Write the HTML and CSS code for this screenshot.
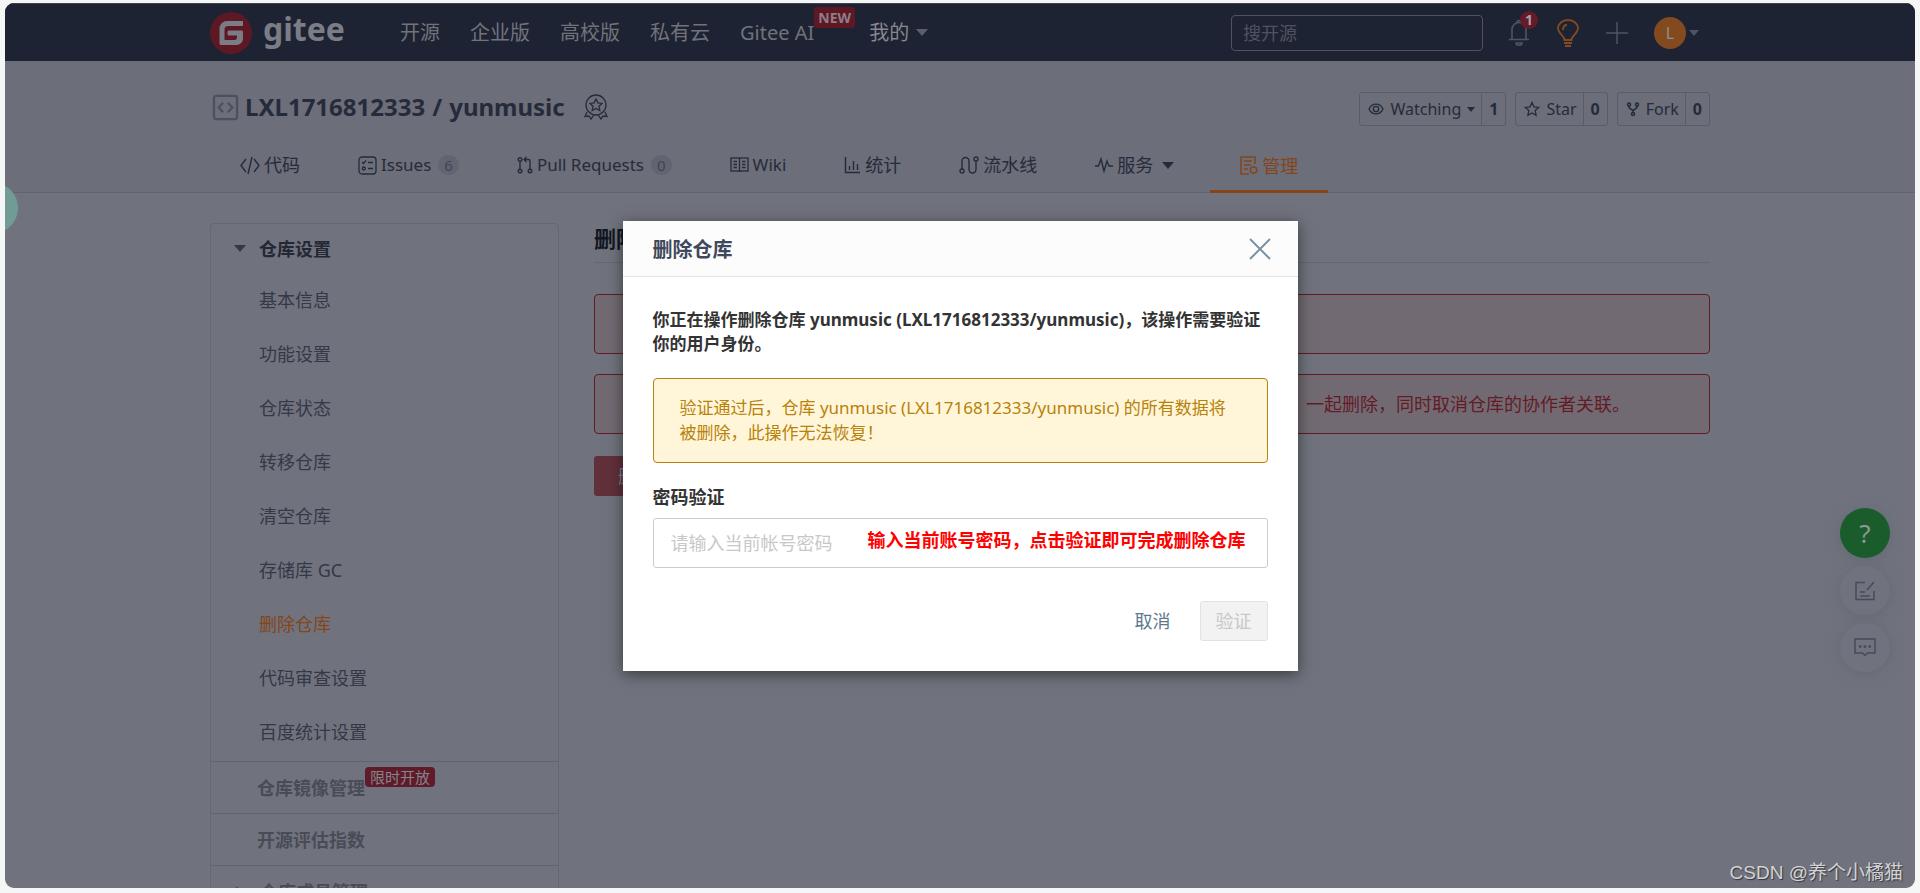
FILE: index.html
```html
<!DOCTYPE html>
<html lang="zh-CN">
<head>
<meta charset="utf-8">
<title>删除仓库 - yunmusic - Gitee</title>
<meta name="viewport" content="width=device-width, initial-scale=1">
<link rel="stylesheet" href="styles.css">
</head>
<body>
<div class="window">
  <header class="topbar">
    <div class="container topbar-inner">
      <a class="logo" href="#" aria-label="gitee">
        <svg class="logo-mark" viewBox="0 0 42 42"><circle cx="21" cy="21" r="21" fill="#5e1824"/><path d="M33 9H17a7.500 7.500 0 0 0-7.500 7.500V31.500c0 .8.700 1.500 1.500 1.500h15.500a6.500 6.500 0 0 0 6.500-6.500V20c0-.8-.7-1.500-1.500-1.500H19c-.8 0-1.500.7-1.500 1.500v2c0 .8.700 1.500 1.500 1.500h8v2c0 1.300-.9 2.500-2.300 2.500H14.500V17.500A3.500 3.500 0 0 1 18 14h15z" fill="#7b7d86"/></svg>
        <span class="logo-text">gitee</span>
      </a>
      <nav class="mainnav">
        <a href="#">开源</a>
        <a href="#">企业版</a>
        <a href="#">高校版</a>
        <a href="#">私有云</a>
        <a href="#" class="nav-ai">Gitee AI<span class="new-tag">NEW</span></a>
        <a href="#" class="nav-mine">我的<i class="caret"></i></a>
      </nav>
      <input class="search" type="text" placeholder="搜开源" aria-label="搜开源">
      <div class="tools">
        <button class="tool" aria-label="通知"><svg width="22" height="26" viewBox="0 0 22 26" fill="none" stroke="#4e5464" stroke-width="1.600"><path d="M4 19V9.500a7 7 0 0 1 14 0V19M1 19.500h20M9 2.500a2 2 0 0 1 4 0M8 23h6c0 3-6 3-6 0z"/></svg><span class="count">1</span></button>
        <button class="tool" aria-label="建议"><svg width="24" height="28" viewBox="0 0 24 28" fill="none" stroke="#824a1e" stroke-width="1.800"><path d="M8.500 21c0-4-6.500-7-6.500-11.500a10 8.500 0 0 1 20 0C22 14 15.500 17 15.500 21zM7 11c0-3 1.500-5 4-5M8 24h8M9 27h6"/></svg></button>
        <button class="tool" aria-label="新建"><svg width="22" height="22" viewBox="0 0 22 22" stroke="#4e5464" stroke-width="1.500"><path d="M11 0v22M0 11h22"/></svg></button>
        <button class="tool user" aria-label="用户"><span class="avatar">L</span><i class="caret dim"></i></button>
      </div>
    </div>
  </header>

  <section class="repo">
    <div class="container">
      <div class="repo-head">
        <h1 class="repo-title">
          <svg width="25" height="25" viewBox="0 0 26 26" fill="none" stroke="#4d515f" stroke-width="2.400"><rect x="1" y="1" width="24" height="24" rx="2"/><path d="M10.500 8L6 13l4.500 5M15.500 8L20 13l-4.500 5"/></svg>
          <a href="#">LXL1716812333</a><span>/</span><a href="#">yunmusic</a>
          <svg class="medal" width="24" height="26" viewBox="0 0 24 26" fill="none" stroke="#272c3c" stroke-width="1.300"><circle cx="12" cy="11" r="10"/><path d="M12 5l1.900 3.800 4.100.6-3 2.900.8 4.200-3.800-2-3.800 2 .8-4.200-3-2.900 4.100-.6zM3 18l-2 4.500 4-.5 2 3 3-4.500M21 18l2 4.500-4-.5-2 3-3-4.500"/></svg>
        </h1>
        <div class="repo-actions">
          <div class="action"><button><svg width="16" height="12" viewBox="0 0 16 12" fill="none" stroke="#262b3b" stroke-width="1.300"><path d="M1 6c3-6.500 11-6.500 14 0-3 6.500-11 6.500-14 0z"/><circle cx="8" cy="6" r="2.700"/></svg><span>Watching</span><i class="caret small"></i></button><a href="#">1</a></div>
          <div class="action"><button><svg width="16" height="16" viewBox="0 0 16 16" fill="none" stroke="#262b3b" stroke-width="1.300"><path d="M8 1.500l2 4.300 4.700.6-3.500 3.200.9 4.700L8 12l-4.100 2.300.9-4.700L1.300 6.400 6 5.800z"/></svg>Star</button><a href="#">0</a></div>
          <div class="action"><button><svg width="14" height="16" viewBox="0 0 14 16" fill="none" stroke="#262b3b" stroke-width="1.500"><circle cx="3" cy="3.500" r="1.500"/><circle cx="11" cy="3.500" r="1.500"/><circle cx="7" cy="13" r="1.500"/><path d="M3 5v1.500l4 3 4-3V5M7 9.500v2"/></svg>Fork</button><a href="#">0</a></div>
        </div>
      </div>
      <nav class="tabs">
        <a href="#"><svg width="20" height="18" viewBox="0 0 20 18" fill="none" stroke="#262b3b" stroke-width="1.400"><path d="M6 3L1 9.500 6 16M14 3l5 6.500L14 16M12 1L8 18"/></svg>代码</a>
        <a href="#" class="latin"><svg width="19" height="19" viewBox="0 0 19 19" fill="none" stroke="#262b3b" stroke-width="1.300"><rect x="1" y="1" width="17" height="17" rx="3"/><path d="M4 6l1.500 1.500L8 4.500M10 6.500h5M10 12.500h5"/><circle cx="5.800" cy="12.500" r="1.500"/></svg>Issues<span class="pill">6</span></a>
        <a href="#" class="latin"><svg width="16" height="18" viewBox="0 0 16 18" fill="none" stroke="#262b3b" stroke-width="1.400"><circle cx="3" cy="3.500" r="1.800"/><circle cx="3" cy="15" r="1.800"/><circle cx="13" cy="15" r="1.800"/><path d="M3 5.500V13M13 13V5c0-1-.5-1.500-1.500-1.500H7M9.500 1L7 3.500 9.500 6"/></svg>Pull Requests<span class="pill">0</span></a>
        <a href="#" class="latin"><svg width="19" height="16" viewBox="0 0 19 16" fill="none" stroke="#262b3b" stroke-width="1.300"><rect x="1" y="1" width="17" height="13"/><path d="M9.500 1v14M3.500 4.500H7M3.500 7.500H7M3.500 10.500H7M12 4.500h3.500M12 7.500h3.500M12 10.500h3.500"/></svg>Wiki</a>
        <a href="#"><svg width="17" height="18" viewBox="0 0 17 18" fill="none" stroke="#262b3b" stroke-width="1.400"><path d="M1.500 1v15.500H16M5.500 14v-4M9.500 14V5M13.500 14V8"/></svg>统计</a>
        <a href="#"><svg width="20" height="18" viewBox="0 0 20 18" fill="none" stroke="#262b3b" stroke-width="1.400"><circle cx="3" cy="15" r="2"/><circle cx="17" cy="3" r="2"/><path d="M3 13V5a3.500 3.500 0 0 1 7 0v8.500a3.500 3.500 0 0 0 7 0V5"/></svg>流水线</a>
        <a href="#"><svg width="18" height="16" viewBox="0 0 18 16" fill="none" stroke="#262b3b" stroke-width="1.400"><path d="M0 9h3.500L6 2l3 12 3-10 2 5h4"/></svg>服务<i class="caret big"></i></a>
        <a href="#" class="active"><svg width="18" height="19" viewBox="0 0 18 19" fill="none" stroke="#84451a" stroke-width="1.500"><path d="M15 8V1H1v17h8M4 5h8M4 9h7M4 13h4"/><path d="M13.500 10.500l3 1.700v3.600l-3 1.700-3-1.700v-3.600z"/></svg>管理</a>
      </nav>
    </div>
  </section>

  <div class="container content">
    <aside class="sidebar">
      <a href="#" class="side-title"><i class="caret"></i>仓库设置</a>
      <a href="#">基本信息</a>
      <a href="#">功能设置</a>
      <a href="#">仓库状态</a>
      <a href="#">转移仓库</a>
      <a href="#">清空仓库</a>
      <a href="#">存储库 GC</a>
      <a href="#" class="current">删除仓库</a>
      <a href="#">代码审查设置</a>
      <a href="#">百度统计设置</a>
      <a href="#" class="side-group">仓库镜像管理<span class="limited">限时开放</span></a>
      <a href="#" class="side-group">开源评估指数</a>
      <a href="#" class="side-group"><i class="caret right"></i>仓库成员管理</a>
    </aside>
    <main class="main">
      <h2>删除仓库</h2>
      <p class="danger">是否确认删除该仓库？此操作无法恢复！</p>
      <p class="danger">删除仓库将会连同其相关的所有数据（包括问题、合并请求、里程碑、附件、提醒等）一起删除，同时取消仓库的协作者关联。</p>
      <button class="delete">删除仓库</button>
    </main>
  </div>

  <div class="side-handle"></div>
  <div class="floaters">
    <button class="help" aria-label="帮助">?</button>
    <button aria-label="反馈"><svg width="20" height="20" viewBox="0 0 20 20" fill="none" stroke="#464b5b" stroke-width="1.500"><path d="M10 1.500H1v17h18V10M12 9l7-8M5 11h5M5 15h10"/></svg></button>
    <button aria-label="评论"><svg width="22" height="19" viewBox="0 0 22 19" fill="none" stroke="#464b5b" stroke-width="1.500"><path d="M1 1h20v14h-7.500L11 17.500 8.500 15H1z"/><path d="M5 8.500h2.500M9.700 8.500h2.500M14.500 8.500H17" stroke-width="2.500"/></svg></button>
  </div>

  <div class="overlay">
    <div class="modal" role="dialog" aria-labelledby="dlg-title">
      <div class="modal-head">
        <h3 id="dlg-title">删除仓库</h3>
        <button class="close" aria-label="关闭"><svg width="20" height="20" viewBox="0 0 20 20" stroke="#7892a3" stroke-width="2"><path d="M0 0l20 20M20 0L0 20"/></svg></button>
      </div>
      <form class="modal-body">
        <p class="lead">你正在操作删除仓库 yunmusic (LXL1716812333/yunmusic)，该操作需要验证你的用户身份。</p>
        <p class="warn">验证通过后，仓库 yunmusic (LXL1716812333/yunmusic) 的所有数据将被删除，此操作无法恢复！</p>
        <label for="pwd">密码验证</label>
        <div class="field">
          <input id="pwd" type="password" placeholder="请输入当前帐号密码">
          <span class="note">输入当前账号密码，点击验证即可完成删除仓库</span>
        </div>
        <div class="buttons">
          <button type="button" class="cancel">取消</button>
          <button type="submit" class="verify" disabled>验证</button>
        </div>
      </form>
    </div>
  </div>
  <div class="watermark">CSDN @养个小橘猫</div>
</div>
</body>
</html>
```
FILE: styles.css
```css
* { box-sizing: border-box; }
body {
  margin: 0;
  padding: 3px 5px 5px;
  background: #f5f6f6;
  font: 18px/24px "Noto Sans", "Noto Sans CJK SC", sans-serif;
  color: #262b3b;
}
a { color: inherit; text-decoration: none; }
button, input { font: inherit; color: inherit; }
button { padding: 0; border: 0; background: none; }
svg { display: block; flex: none; overflow: visible; }
h1, h2, h3, p { margin: 0; }

.window {
  position: relative;
  height: calc(100vh - 8px);
  overflow: hidden;
  border-radius: 9px;
  background: #70737d;
}
.container { width: 100%; max-width: 1500px; margin: 0 auto; }

.caret {
  flex: none;
  border: 6px solid transparent;
  border-top: 7px solid #5b5f6b;
  border-bottom: 0;
}
.caret.dim { border-width: 6px 5px 0; border-top-color: #4e5464; }
.caret.small { border-width: 5px 4px 0; border-top-color: #262b3b; }
.caret.big { border-top-color: #262b3b; }
.caret.right { border: 6px solid transparent; border-left: 7px solid #4a4d58; border-right: 0; }

/* top bar */
.topbar { background: #1e2333; border-top: 1px solid #41444f; }
.topbar-inner { display: flex; align-items: center; height: 57px; }
.logo { display: flex; align-items: center; gap: 11px; width: 190px; }
.logo-mark { width: 42px; height: 42px; }
.logo-text { font: bold 32px/42px "Noto Sans", sans-serif; color: #7b7d86; padding-bottom: 8px; }
.mainnav { display: flex; gap: 30px; font-size: 20px; color: #70737b; }
.mainnav a { white-space: nowrap; }
.nav-ai { position: relative; margin-right: 25px; }
.new-tag {
  position: absolute;
  left: 100%;
  top: -14px;
  padding: 0 4px;
  border-radius: 3px;
  background: #5e1824;
  color: #8b7f88;
  font: bold 14px/21px "Noto Sans", sans-serif;
}
.nav-mine { display: flex; align-items: center; gap: 7px; color: #868890; }
.search {
  width: 252px;
  height: 36px;
  margin-left: auto;
  padding: 0 11px;
  border: 1px solid #50535f;
  border-radius: 4px;
  background: transparent;
}
.search::placeholder { color: #50535f; opacity: 1; }
.tools { display: flex; align-items: center; gap: 26px; padding: 0 11px 0 25px; }
.tool { position: relative; }
.count {
  position: absolute;
  left: 12px;
  top: -9px;
  width: 18px;
  border-radius: 9px;
  background: #631b2a;
  color: #a3a3aa;
  font: bold 14px/18px "Noto Sans", sans-serif;
}
.user { display: flex; align-items: center; gap: 3px; }
.avatar {
  width: 32px;
  border-radius: 50%;
  background: #824a1e;
  color: #8f8f8f;
  font-size: 16px;
  line-height: 32px;
}

/* repository header */
.repo { background: #6c6e79; border-bottom: 1px solid #61636e; }
.repo-head { display: flex; align-items: flex-start; justify-content: space-between; padding: 29px 0 0 3px; }
.repo-title { display: flex; align-items: center; gap: 7px; font-size: 24px; line-height: 34px; }
.medal { margin-left: 12px; }
.repo-actions { display: flex; gap: 9px; margin-top: 2px; }
.action {
  display: flex;
  height: 34px;
  border: 1px solid #595c69;
  border-radius: 3px;
  font-size: 16px;
}
.action button { display: flex; align-items: center; gap: 6px; padding: 0 6px 0 8px; }
.action a { padding: 0 7px; border-left: 1px solid #595c69; font-weight: bold; line-height: 32px; }
.tabs { display: flex; height: 66px; }
.tabs a { display: flex; align-items: center; gap: 4px; padding: 12px 29px 0; }
.tabs a:first-child { padding-left: 30px; }
.tabs .latin { font-size: 17px; }
.tabs .pill {
  margin-left: 3px;
  padding: 0 6px;
  border-radius: 10px;
  background: #626571;
  color: #3e4456;
  font-size: 15px;
  line-height: 20px;
}
.tabs .big { margin-left: 5px; }
.tabs .active { margin: 0 0 -1px 7px; padding: 15px 30px 0; border-bottom: 3px solid #84451a; color: #84451a; }

/* content */
.content { display: flex; gap: 35px; padding-top: 30px; }
.sidebar {
  flex: none;
  width: 349px;
  border: 1px solid #656771;
  border-radius: 4px;
  color: #343847;
}
.sidebar a { display: flex; align-items: center; height: 54px; padding-left: 48px; }
.sidebar .side-title { gap: 13px; height: 49px; padding-left: 23px; color: #242834; font-weight: bold; }
.side-title .caret { border-top-color: #343847; }
.sidebar .current { color: #84451a; }
.sidebar .side-group {
  height: 52px;
  padding-left: 46px;
  border-top: 1px solid #62646f;
  color: #494c57;
  font-weight: bold;
}
.sidebar a:not(.side-group) + .side-group { margin-top: 2px; }
.sidebar .side-group:has(.caret) { gap: 17px; padding-left: 25px; }
.limited {
  align-self: flex-start;
  margin-top: 5px;
  padding: 0 5px;
  border-radius: 4px;
  background: #601b29;
  color: #85858e;
  font-size: 15px;
  font-weight: normal;
  line-height: 20px;
}
.main { flex: 1; min-width: 0; }
.main h2 {
  padding-bottom: 9px;
  border-bottom: 1px solid #646771;
  color: #121622;
  font-size: 22px;
  line-height: 30px;
}
.danger {
  height: 60px;
  margin-top: 20px;
  padding: 17px 27px;
  border: 1px solid #631b26;
  border-radius: 4px;
  background: #726a72;
  color: #631b26;
  white-space: nowrap;
}
.main h2 + .danger { margin-top: 31px; }
.delete {
  height: 40px;
  margin-top: 22px;
  padding: 0 24px;
  border-radius: 3px;
  background: #62303b;
  color: #80838d;
}

/* floating items */
.side-handle {
  position: absolute;
  left: -35px;
  top: 180px;
  width: 48px;
  height: 50px;
  border-radius: 50%;
  background: #719b95;
}
.floaters {
  position: absolute;
  right: 25px;
  bottom: 216px;
  display: grid;
  gap: 8px;
}
.floaters button {
  display: grid;
  place-items: center;
  width: 50px;
  height: 49px;
  border-radius: 50%;
  background: #70727d;
  box-shadow: 0 2px 14px #666973;
}
.floaters .help { height: 50px; background: #1b5c2c; color: #8b9a93; font-size: 26px; }

/* dialog */
.overlay {
  position: absolute;
  inset: 0;
  display: flex;
  justify-content: center;
  align-items: flex-start;
  padding-top: 218px;
}
.modal {
  width: 675px;
  max-width: 100%;
  background: #fff;
  box-shadow: 0 3px 14px rgba(0, 0, 0, .5);
}
.modal-head {
  display: flex;
  align-items: center;
  justify-content: space-between;
  height: 56px;
  padding: 0 28px 0 30px;
  border-bottom: 1px solid #e3e5e9;
  background: #fcfcfc;
}
.modal-head h3 { color: #40485b; font-size: 20px; line-height: 28px; padding-top: 3px; }
.modal-body { padding: 31px 30px 30px; font-size: 17px; }
.lead { color: #333; font-weight: bold; line-height: 24px; }
.warn {
  margin: 22px 0;
  padding: 16px 26px 17px;
  border: 1px solid #b88109;
  border-radius: 4px;
  background: #fff6da;
  color: #b88109;
  line-height: 25px;
}
.modal-body label { display: block; color: #333; font-size: 18px; font-weight: bold; }
.field { position: relative; margin-top: 9px; }
.field input {
  display: block;
  width: 100%;
  height: 50px;
  padding: 0 17px;
  border: 1px solid #cbcbd6;
  border-radius: 3px;
  background: #fff;
  font-size: 18px;
}
.field input::placeholder { color: #c8c8c8; opacity: 1; }
.note {
  position: absolute;
  right: 22px;
  top: 10px;
  color: #f00;
  font-size: 18px;
  font-weight: bold;
  white-space: nowrap;
}
.buttons { display: flex; justify-content: flex-end; gap: 13px; margin-top: 33px; font-size: 18px; }
.buttons button { height: 40px; padding: 0 15px; border: 1px solid transparent; border-radius: 3px; }
.cancel { color: #5c7a8c; }
.buttons .verify { border-color: #e2e2e2; background: #f2f2f2; color: #c8c8c8; }

.watermark {
  position: absolute;
  right: 12px;
  bottom: 3px;
  color: #d2d3d5;
  font: 19px/24px "Liberation Sans", "Noto Sans CJK SC", sans-serif;
  text-shadow: 1px 1px 1px #33353b;
}
```
